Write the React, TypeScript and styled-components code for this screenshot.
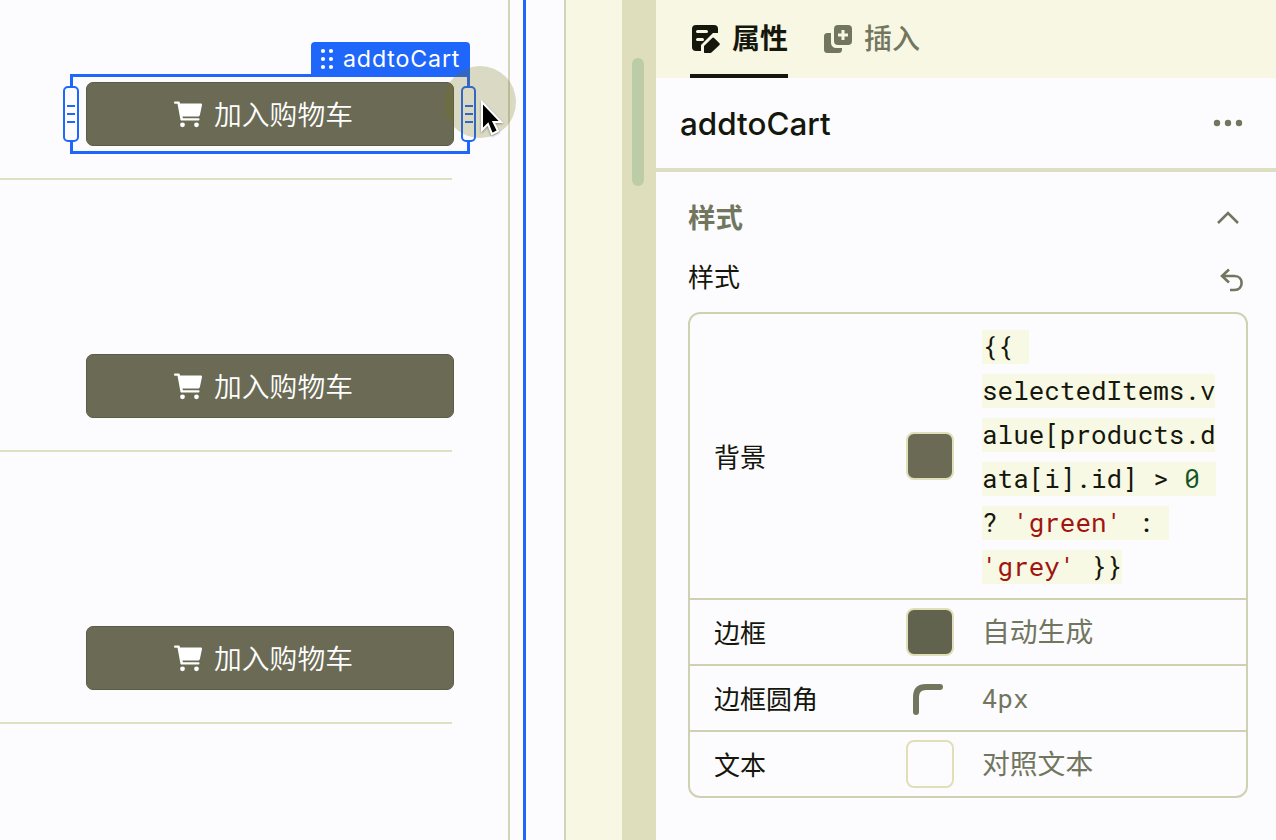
import React from "react";
import styled, { createGlobalStyle } from "styled-components";

const blue = "#1f66fb";
const ink = "#15160c";
const muted = "#72765f";
const line = "#d0d1b2";
const olive = "#6b6b55";
const pale = "#f7f7e4";

const GlobalStyle = createGlobalStyle`
  *{box-sizing:border-box}
  body{margin:0;overflow:hidden;background:#fcfcfe}
  body,button{font-family:Inter,"Noto Sans CJK SC",sans-serif}
`;
const Page = styled.div`display:flex;width:1276px;height:840px;overflow:hidden;background:#fcfcfe;color:${ink};`;
const Canvas = styled.main`width:526px;height:840px;border-right:3px solid ${blue};flex:none;display:flex;`;
const ListFrame = styled.section`width:510px;border-right:2px solid #d3d4bc;flex:none;`;
const ListItem = styled.div<{ $first?: boolean }>`
  width:452px;height:${p => (p.$first ? 180 : 272)}px;padding:${p => (p.$first ? 74 : 166)}px 0 0 70px;
  border-bottom:2px solid #dfdfc6;
`;
const Widget = styled.div<{ $selected?: boolean }>`
  position:relative;width:400px;height:80px;padding:5px 13px;border:3px solid ${p => (p.$selected ? blue : "transparent")};
`;
const CartButton = styled.button`
  display:flex;align-items:center;justify-content:center;gap:11px;width:368px;height:64px;border:1px solid #5b5c48;
  border-radius:7px;background:${olive};color:#fff;font-size:27.8px;line-height:40px;padding:1px 13px 0 0;font-weight:350;
  svg{display:block;flex:none}
`;
const NameTag = styled.div`
  position:absolute;right:-3px;top:-35px;width:159px;height:34px;border-radius:4px 4px 0 0;background:${blue};color:#fff;
  display:flex;align-items:center;gap:9px;padding-left:9px;font-size:23.2px;font-weight:400;letter-spacing:.85px;line-height:34px;
`;
const Handle = styled.i<{ $right?: boolean }>`
  position:absolute;top:9px;${p => (p.$right ? "right:-9px;width:15px" : "left:-10px;width:16px")};height:56px;border:2px solid ${blue};
  border-radius:5px;background:#fcfcfe;display:flex;flex-direction:column;align-items:center;justify-content:center;gap:6px;
`;
const Grip = styled.b`width:8px;height:2px;background:${blue};`;
const ClickHalo = styled.span`position:absolute;left:371px;top:-11px;width:72px;height:72px;border-radius:50%;background:rgba(112,112,25,.25);`;
const Cursor = styled.svg`position:absolute;left:407px;top:23px;filter:drop-shadow(0 1px 1px #0006);`;
const Gap = styled.div`width:38px;flex:none;`;
const Gutter = styled.div`width:58px;background:${pale};border-left:2px solid #d2d3b8;flex:none;`;
const Track = styled.div`width:34px;background:#dedebc;padding:58px 0 0 10px;flex:none;`;
const Thumb = styled.div`width:12px;height:128px;border-radius:6px;background:#bccca6;`;
const Inspector = styled.aside`width:620px;flex:none;`;
const Tabs = styled.nav`height:78px;background:${pale};display:flex;padding-left:34px;gap:34px;`;
const Tab = styled.div<{ $active?: boolean }>`
  height:78px;display:flex;align-items:center;gap:12px;font-size:28px;line-height:40px;padding:3px 0 0 2px;
  font-weight:${p => (p.$active ? 700 : 500)};color:${p => (p.$active ? ink : muted)};
  border-bottom:4px solid ${p => (p.$active ? ink : "transparent")};
  svg{display:block}
`;
const Header = styled.header`height:94px;border-bottom:4px solid #dedec2;display:flex;justify-content:space-between;align-items:center;padding:1px 33px 0 24px;font-size:31.4px;font-weight:500;svg{margin-bottom:2px}`;
const Body = styled.div`padding:24px 28px 0 32px;`;
const SectionTitle = styled.div`height:42px;display:flex;align-items:center;justify-content:space-between;color:${muted};font-size:27.5px;line-height:38px;font-weight:600;padding:1px 8px 0 0;svg{margin-top:1px}`;
const SubTitle = styled.div`height:74px;display:flex;align-items:center;justify-content:space-between;font-size:26px;padding:0 4px 0 0;svg{margin-top:10px}`;
const Table = styled.div`width:560px;border:2px solid ${line};border-radius:12px;`;
const Row = styled.div<{ $h: number }>`
  height:${p => p.$h}px;display:grid;grid-template-columns:192px 76px 1fr;align-items:center;padding-left:24px;font-size:26px;
  & + &{border-top:2px solid ${line}}
`;
const Label = styled.span`padding-bottom:2px;`;
const Swatch = styled.div<{ $color: string }>`width:48px;height:48px;border:2px solid #e0dfb8;border-radius:8px;background:${p => p.$color};`;
const Value = styled.div<{ $mono?: boolean }>`
  color:${muted};font-size:${p => (p.$mono ? 25.8 : 27.8)}px;padding-bottom:${p => (p.$mono ? 0 : 4)}px;
  ${p => (p.$mono ? "font-family:'Roboto Mono','DejaVu Sans Mono',monospace;" : "")}
`;
const Code = styled.code`display:flex;flex-direction:column;align-items:flex-start;gap:10px;color:${ink};padding-top:1px;`;
const CodeLine = styled.span`
  display:block;height:34px;line-height:32px;white-space:pre;background:#f8f9e5;
  font-family:"Roboto Mono","DejaVu Sans Mono",monospace;font-size:25.95px;
`;
const Str = styled.span`color:#a11510;`;
const Num = styled.span`color:#155524;`;

const CartIcon = () => (
  <svg width="29" height="28" viewBox="0 0 29 28" fill="#fff">
    <path d="M0 1.5C0 .7.6.5 1.2.5h3.2c.9 0 1.3.4 1.5 1.2l.2.8h20.7c.9 0 1.4.6 1.2 1.4l-2.1 10c-.2.9-.9 1.5-1.8 1.5H8.5l.4 1.8h15.5c1.5 0 1.5 2.4 0 2.4H7.8c-.8 0-1.2-.4-1.4-1.2L3.5 2.8H1.2C.5 2.8 0 2.2 0 1.5Z" />
    <circle cx="8.5" cy="23.8" r="2.4" /><circle cx="22.5" cy="23.8" r="2.4" />
  </svg>
);
const DotsIcon = () => (
  <svg width="14" height="22" fill="#fff">
    {[3, 11].map(x => [3, 11, 19].map(y => <circle key={`${x}-${y}`} cx={x} cy={y} r="2.1" />))}
  </svg>
);
const PropertiesIcon = () => (
  <svg width="28" height="28" viewBox="0 0 28 28">
    <rect width="26" height="26" rx="4" fill={ink} />
    <path d="M5.5 6.5h9M5.5 14.5h5" stroke={pale} strokeWidth="3" strokeLinecap="round" />
    <path d="M12 28H9v-8L21 8h7v20Z" fill={pale} />
    <path d="m12 21 8-7.8c.8-.8 1.6-.8 2.4 0l4.8 4.8c.8.8.8 1.4 0 2.2L20 27c-.7.7-1.2 1-2.2 1H13c-.8 0-1-.3-1-1Z" fill={ink} />
  </svg>
);
const InsertIcon = () => (
  <svg width="28" height="28" viewBox="0 0 28 28" fill={muted}>
    <rect x="10" width="18" height="20" rx="4" />
    <path d="M4 8h3v9c0 4 2 6 6 6h5v1c0 3-1 4-4 4H4c-3 0-4-1-4-4V12c0-3 1-4 4-4Z" />
    <path d="M19 5v10M14 10h10" stroke={pale} strokeWidth="3" />
  </svg>
);
const MoreIcon = () => (
  <svg width="30" height="8" fill={muted}>{[4, 15, 26].map(x => <circle key={x} cx={x} cy="4" r="3.2" />)}</svg>
);
const CollapseIcon = () => (
  <svg width="24" height="14" fill="none" stroke={muted} strokeWidth="2.6"><path d="m2 12 10-10 10 10" /></svg>
);
const UndoIcon = () => (
  <svg width="24" height="24" fill="none" stroke={muted} strokeWidth="2.6"><path d="M9 1.5 2 8l7 6.5M2.5 8H14.5c9.5 0 9.5 14 0 14H10" /></svg>
);
const CornerIcon = () => (
  <svg width="46" height="46" fill="none" stroke={muted} strokeWidth="6" strokeLinecap="round"><path d="M10 37V22q0-10 10-10h14" /></svg>
);

const Cart = () => <CartButton><CartIcon />加入购物车</CartButton>;

export default function App() {
  return (
    <Page>
      <GlobalStyle />
      <Canvas>
        <ListFrame>
          <ListItem $first>
            <Widget $selected>
              <Cart />
              <NameTag><DotsIcon />addtoCart</NameTag>
              <Handle><Grip /><Grip /><Grip /></Handle>
              <Handle $right><Grip /><Grip /><Grip /></Handle>
              <ClickHalo />
              <Cursor width="26" height="38" viewBox="0 0 26 38">
                <path d="M2 2v28l6-6 4 10 6-3-4.5-9H21Z" fill="#000" stroke="#fff" strokeWidth="2" />
              </Cursor>
            </Widget>
          </ListItem>
          <ListItem><Widget><Cart /></Widget></ListItem>
          <ListItem><Widget><Cart /></Widget></ListItem>
        </ListFrame>
      </Canvas>
      <Gap />
      <Gutter />
      <Track><Thumb /></Track>
      <Inspector>
        <Tabs>
          <Tab $active><PropertiesIcon />属性</Tab>
          <Tab><InsertIcon />插入</Tab>
        </Tabs>
        <Header>addtoCart<MoreIcon /></Header>
        <Body>
          <SectionTitle>样式<CollapseIcon /></SectionTitle>
          <SubTitle>样式<UndoIcon /></SubTitle>
          <Table>
            <Row $h={284}>
              <Label>背景</Label><Swatch $color={olive} />
              <Code>
                <CodeLine>{"{{ "}</CodeLine>
                <CodeLine>selectedItems.v</CodeLine>
                <CodeLine>alue[products.d</CodeLine>
                <CodeLine>ata[i].id] &gt; <Num>0</Num>{" "}</CodeLine>
                <CodeLine>? <Str>'green'</Str>{" : "}</CodeLine>
                <CodeLine><Str>'grey'</Str>{" }}"}</CodeLine>
              </Code>
            </Row>
            <Row $h={66}><Label>边框</Label><Swatch $color="#62634e" /><Value>自动生成</Value></Row>
            <Row $h={66}><Label>边框圆角</Label><CornerIcon /><Value $mono>4px</Value></Row>
            <Row $h={66}><Label>文本</Label><Swatch $color="#fcfcfe" /><Value>对照文本</Value></Row>
          </Table>
        </Body>
      </Inspector>
    </Page>
  );
}
